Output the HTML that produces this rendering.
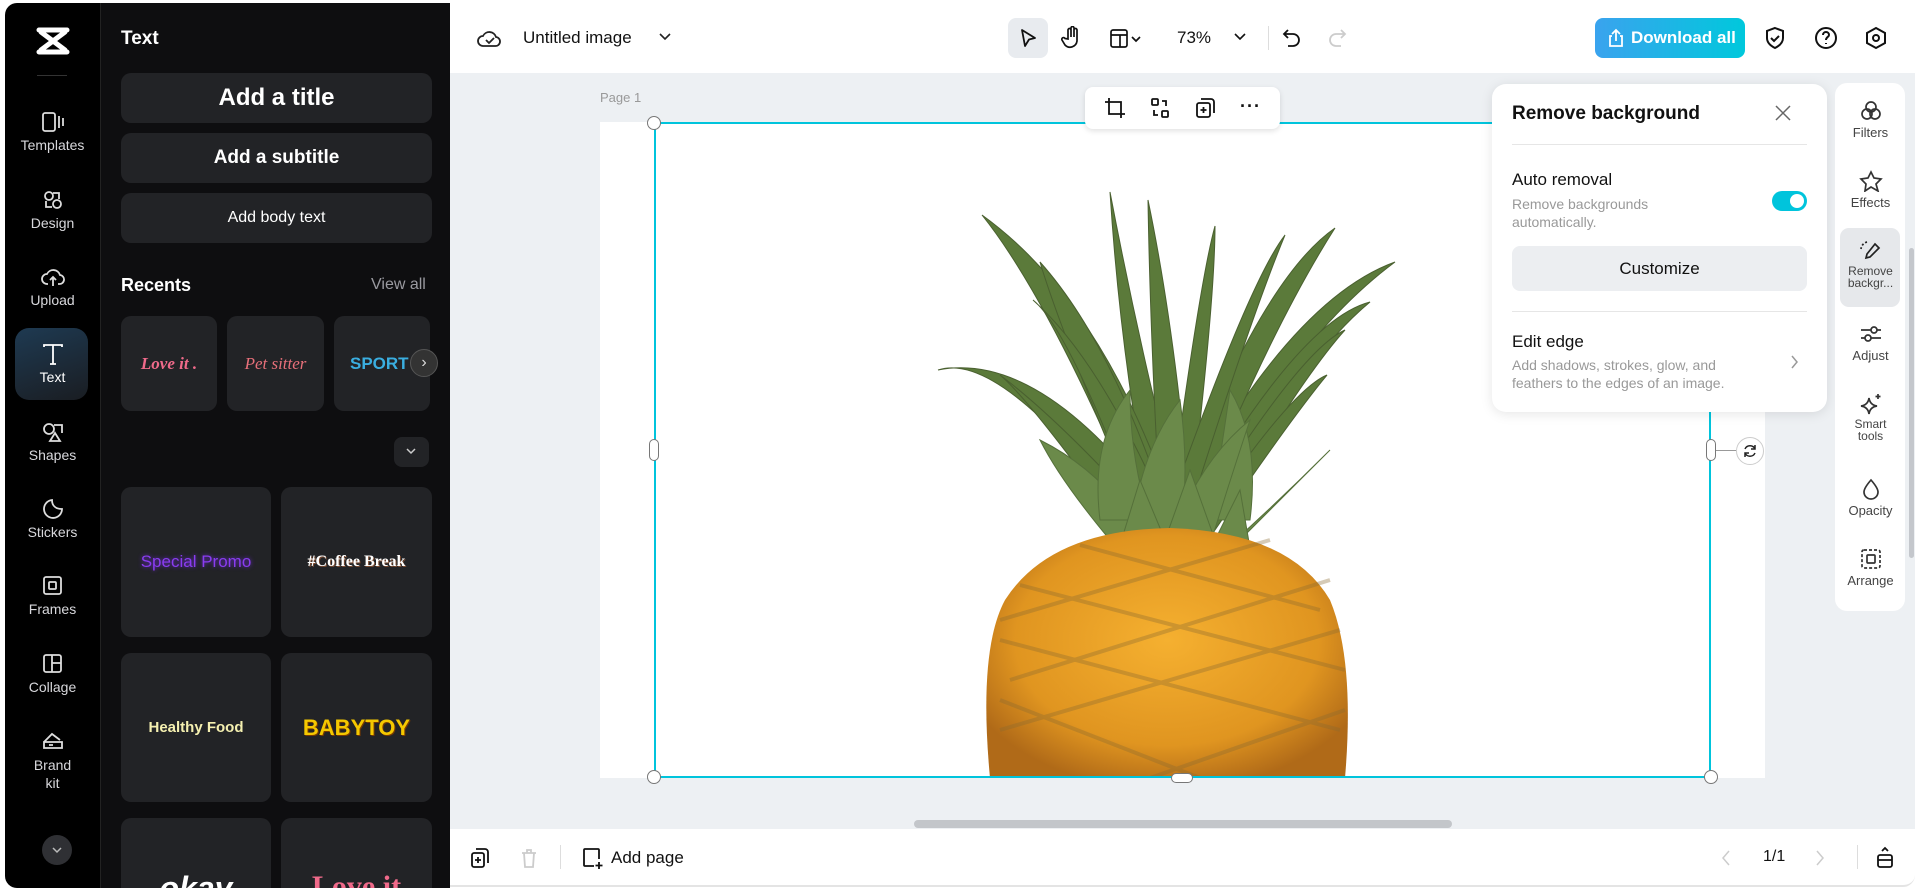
<!DOCTYPE html>
<html><head><meta charset="utf-8"><style>
*{box-sizing:border-box;margin:0;padding:0}
body{width:1920px;height:893px;overflow:hidden;background:#fff;font-family:"Liberation Sans",sans-serif;position:relative}
.abs{position:absolute}
#side{left:5px;top:3px;width:95px;height:885px;background:#000;border-radius:12px 0 0 12px}
#panel{left:100px;top:3px;width:350px;height:885px;background:#0e0e10;border-left:1px solid #222;overflow:hidden}
.nav{position:absolute;left:0;width:95px;text-align:center;color:#d8d8dc;font-size:14px}
.nav svg{display:block;margin:0 auto 4px}
.btn{position:absolute;left:20px;width:311px;height:50px;background:#222326;border-radius:10px;color:#fff;font-weight:bold;text-align:center;line-height:50px}
.card{position:absolute;background:#222326;border-radius:10px;display:flex;align-items:center;justify-content:center}
.ti{font-size:13px;color:#444;text-align:center;position:absolute;width:67px;left:0}
.ti svg{display:block;margin:0 auto 3px}
</style></head><body>
<div id="side" class="abs">
 <svg class="abs" style="left:31px;top:24px" width="34" height="28" viewBox="0 0 34 28"><path d="M3 3 H31 M3 25 H31 M5 5 L29 23 M29 5 L5 23" stroke="#fff" stroke-width="5" fill="none" stroke-linecap="round"/></svg>
 <div class="abs" style="left:32px;top:72px;width:30px;height:1px;background:#333"></div>
 <div class="nav" style="top:108px"><svg width="24" height="22" viewBox="0 0 24 22" fill="none" stroke="#ddd" stroke-width="1.8"><rect x="2" y="2" width="12" height="18" rx="2"/><path d="M18 5v12M22 7v8"/></svg>Templates</div>
 <div class="nav" style="top:186px"><svg width="22" height="22" viewBox="0 0 22 22" fill="none" stroke="#ddd" stroke-width="1.8"><circle cx="7" cy="7" r="4"/><circle cx="15" cy="15" r="4"/><path d="M11 4l6 0 0 6M4 12l0 6 6 0"/></svg>Design</div>
 <div class="nav" style="top:263px"><svg width="24" height="22" viewBox="0 0 24 22" fill="none" stroke="#ddd" stroke-width="1.8"><path d="M7 18H6a5 5 0 010-10 7 7 0 0113 1 4 4 0 01-1 9h-1M12 11v9M9 14l3-3 3 3"/></svg>Upload</div>
 <div class="abs" style="left:10px;top:325px;width:73px;height:72px;border-radius:14px;background:linear-gradient(160deg,#1e3a52,#1a1d22)"></div>
 <div class="nav" style="top:340px;color:#fff"><svg width="24" height="22" viewBox="0 0 24 22" fill="none" stroke="#fff" stroke-width="1.8"><path d="M3 4V2h18v2M12 2v19M9 21h6"/></svg>Text</div>
 <div class="nav" style="top:418px"><svg width="24" height="22" viewBox="0 0 24 22" fill="none" stroke="#ddd" stroke-width="1.8"><circle cx="8" cy="8" r="5"/><path d="M13 4h8v8M14 12l-5 8h10z"/></svg>Shapes</div>
 <div class="nav" style="top:495px"><svg width="24" height="22" viewBox="0 0 24 22" fill="none" stroke="#ddd" stroke-width="1.8"><path d="M21 11a9 9 0 11-10-9c0 6 4 9 10 9z"/></svg>Stickers</div>
 <div class="nav" style="top:572px"><svg width="24" height="22" viewBox="0 0 24 22" fill="none" stroke="#ddd" stroke-width="1.8"><rect x="3" y="2" width="17" height="17" rx="2"/><rect x="8" y="7" width="7" height="7" rx="1"/></svg>Frames</div>
 <div class="nav" style="top:650px"><svg width="24" height="22" viewBox="0 0 24 22" fill="none" stroke="#ddd" stroke-width="1.8"><rect x="3" y="2" width="17" height="17" rx="2"/><path d="M11 2v17M11 10h9"/></svg>Collage</div>
 <div class="nav" style="top:727px;line-height:18px"><svg width="24" height="22" viewBox="0 0 24 22" fill="none" stroke="#ddd" stroke-width="1.8"><path d="M3 12h18v6H3zM3 12l8-8 8 6M8 15h4"/></svg>Brand<br>kit</div>
 <div class="abs" style="left:37px;top:832px;width:30px;height:30px;border-radius:50%;background:#2f3034"></div>
 <svg class="abs" style="left:45px;top:842px" width="14" height="10"><path d="M3 3l4 4 4-4" stroke="#bbb" fill="none" stroke-width="1.5"/></svg>
</div>
<div id="panel" class="abs">
 <div class="abs" style="left:20px;top:25px;color:#fff;font-weight:bold;font-size:19px">Text</div>
 <div class="btn" style="top:70px;font-size:24px">Add a title</div>
 <div class="btn" style="top:130px;font-size:19px">Add a subtitle</div>
 <div class="btn" style="top:190px;font-size:16px;font-weight:normal">Add body text</div>
 <div class="abs" style="left:20px;top:272px;color:#fff;font-weight:bold;font-size:18px">Recents</div>
 <div class="abs" style="left:270px;top:273px;color:#9a9aa0;font-size:16px">View all</div>
 <div class="card" style="left:20px;top:313px;width:96px;height:95px"><span style="color:#f06a8a;font:italic bold 17px 'Liberation Serif',serif">Love it .</span></div>
 <div class="card" style="left:126px;top:313px;width:97px;height:95px"><span style="color:#e8707a;font:italic 17px 'Liberation Serif',serif">Pet sitter</span></div>
 <div class="card" style="left:233px;top:313px;width:96px;height:95px;justify-content:flex-start;padding-left:16px"><span style="color:#3aaee0;font-weight:bold;font-size:17px">SPORT</span></div>
 <div class="abs" style="left:309px;top:346px;width:28px;height:28px;border-radius:50%;background:#333;border:1px solid #555;color:#ddd;text-align:center;line-height:26px;font-size:16px">›</div>
 <div class="abs" style="left:293px;top:434px;width:35px;height:30px;border-radius:8px;background:#222326"></div>
 <svg class="abs" style="left:303px;top:444px" width="14" height="10"><path d="M3 2l4 4 4-4" stroke="#ccc" fill="none" stroke-width="1.5"/></svg>
 <div class="card" style="left:20px;top:484px;width:150px;height:150px"><span style="color:#8a3cf0;font-size:17px;text-shadow:0 0 4px #6a2cd0">Special Promo</span></div>
 <div class="card" style="left:180px;top:484px;width:151px;height:150px"><span style="color:#fff;font:bold 16px 'Liberation Serif',serif;text-shadow:1px 1px 0 #7a4a30">#Coffee Break</span></div>
 <div class="card" style="left:20px;top:650px;width:150px;height:149px"><span style="color:#f5f0b0;font-weight:bold;font-size:15px">Healthy Food</span></div>
 <div class="card" style="left:180px;top:650px;width:151px;height:149px"><span style="color:#f5c800;font-weight:900;font-size:22px;text-shadow:1px 1px 0 #7a3a00">BABYTOY</span></div>
 <div class="card" style="left:20px;top:815px;width:150px;height:90px;overflow:hidden;align-items:flex-start;padding-top:52px"><span style="color:#fff;font:italic 900 32px 'Liberation Sans',sans-serif">okay</span></div>
 <div class="card" style="left:180px;top:815px;width:151px;height:90px;overflow:hidden;align-items:flex-start;padding-top:52px"><span style="color:#f06a8a;font:bold 30px 'Liberation Serif',serif">Love it</span></div>
</div>
<div class="abs" style="left:450px;top:415px;width:8px;height:62px;background:#1a1a1a;border-radius:0 8px 8px 0"></div>
<!-- top bar -->
<div class="abs" style="left:450px;top:3px;width:1465px;height:70px;background:#fff"></div>
<svg class="abs" style="left:477px;top:27px" width="26" height="24" viewBox="0 0 26 24" fill="none" stroke="#222" stroke-width="1.8"><path d="M7 19H6a5 5 0 010-10 7 7 0 0113 1 4 4 0 01-1 9H7z"/><path d="M9 13l3 3 5-5"/></svg>
<div class="abs" style="left:523px;top:28px;font-size:17px;color:#111">Untitled image</div>
<svg class="abs" style="left:658px;top:32px" width="14" height="10"><path d="M2 2l5 5 5-5" stroke="#222" fill="none" stroke-width="1.6"/></svg>
<div class="abs" style="left:1008px;top:18px;width:40px;height:40px;border-radius:8px;background:#e8ebef"></div>
<svg class="abs" style="left:1018px;top:28px" width="20" height="20" viewBox="0 0 20 20"><path d="M4 2l13 8-6 1.5L7 18z" stroke="#111" fill="none" stroke-width="1.8" stroke-linejoin="round"/></svg>
<svg class="abs" style="left:1061px;top:26px" width="22" height="24" viewBox="0 0 22 24" fill="none" stroke="#111" stroke-width="1.7"><path d="M7 13V4a1.5 1.5 0 013 0v7V2a1.5 1.5 0 013 0v9V4a1.5 1.5 0 013 0v11a7 7 0 01-12 4l-3-5a1.5 1.5 0 013-1.5z"/></svg>
<svg class="abs" style="left:1110px;top:29px" width="34" height="20" viewBox="0 0 34 20" fill="none" stroke="#111" stroke-width="1.7"><rect x="1" y="1" width="16" height="17" rx="2"/><path d="M1 6h16M10 6v12M22 8l4 4 4-4"/></svg>
<div class="abs" style="left:1177px;top:28px;font-size:17px;color:#111">73%</div>
<svg class="abs" style="left:1233px;top:32px" width="14" height="10"><path d="M2 2l5 5 5-5" stroke="#111" fill="none" stroke-width="1.6"/></svg>
<div class="abs" style="left:1268px;top:26px;width:1px;height:24px;background:#ddd"></div>
<svg class="abs" style="left:1282px;top:27px" width="20" height="22" viewBox="0 0 20 22" fill="none" stroke="#111" stroke-width="1.8"><path d="M6 3L2 7l4 4M2 7h9a6 6 0 010 12H6"/></svg>
<svg class="abs" style="left:1327px;top:27px" width="20" height="22" viewBox="0 0 20 22" fill="none" stroke="#ccc" stroke-width="1.8"><path d="M14 3l4 4-4 4M18 7H9a6 6 0 000 12h5"/></svg>
<div class="abs" style="left:1595px;top:18px;width:150px;height:40px;border-radius:8px;background:linear-gradient(90deg,#3aa3ee,#00c8dc);color:#fff;font-weight:bold;font-size:17px;line-height:40px;padding-left:36px">Download all</div>
<svg class="abs" style="left:1607px;top:28px" width="18" height="20" viewBox="0 0 18 20" fill="none" stroke="#fff" stroke-width="1.8"><path d="M5 8H3v10h12V8h-2M9 13V2M5 6l4-4 4 4"/></svg>
<svg class="abs" style="left:1764px;top:26px" width="22" height="24" viewBox="0 0 22 24" fill="none" stroke="#111" stroke-width="2"><path d="M11 2l8 3v7c0 5-4 8-8 10-4-2-8-5-8-10V5z"/><path d="M7 12l3 3 5-5"/></svg>
<svg class="abs" style="left:1814px;top:26px" width="24" height="24" viewBox="0 0 24 24" fill="none" stroke="#111" stroke-width="2"><circle cx="12" cy="12" r="10"/><path d="M9 9a3 3 0 116 0c0 2-3 2-3 5M12 17v1"/></svg>
<svg class="abs" style="left:1864px;top:26px" width="24" height="24" viewBox="0 0 24 24" fill="none" stroke="#111" stroke-width="2"><path d="M12 2l9 5v10l-9 5-9-5V7z"/><circle cx="12" cy="12" r="3"/></svg>
<!-- canvas -->
<div class="abs" style="left:450px;top:73px;width:1465px;height:756px;background:#edf0f3"></div>
<div class="abs" style="left:600px;top:90px;font-size:13px;color:#999">Page 1</div>
<div class="abs" style="left:600px;top:122px;width:1165px;height:656px;background:#fff"></div>
<svg class="abs" style="left:600px;top:122px" width="1165" height="656" viewBox="600 122 1165 656">
 <defs><radialGradient id="pg" cx="50%" cy="45%" r="60%"><stop offset="0" stop-color="#f5b030"/><stop offset=".7" stop-color="#e09520"/><stop offset="1" stop-color="#b06a18"/></radialGradient></defs>
 <g fill="#5b7a3a" stroke="#4a6030" stroke-width="1">
  <path d="M1150 510 Q1120 350 1110 192 Q1140 350 1180 505z"/>
  <path d="M1160 510 Q1150 330 1148 200 Q1175 330 1190 505z"/>
  <path d="M1140 515 Q1050 300 982 215 Q1100 300 1170 500z"/>
  <path d="M1140 520 Q1060 330 1040 262 Q1110 340 1165 505z"/>
  <path d="M1180 505 Q1290 300 1395 262 Q1290 340 1200 515z"/>
  <path d="M1175 505 Q1260 280 1335 228 Q1270 330 1195 515z"/>
  <path d="M1130 520 Q1000 350 938 370 Q1040 350 1160 510z"/>
  <path d="M1190 510 Q1300 320 1370 302 Q1300 360 1210 520z"/>
  <path d="M1195 520 Q1300 350 1345 330 Q1300 380 1215 525z"/>
  <path d="M1140 520 Q1070 330 1033 300 Q1100 360 1165 510z"/>
  <path d="M1200 525 Q1290 390 1327 375 Q1290 420 1215 530z"/>
  <path d="M1120 525 Q1030 400 1000 375 Q1060 420 1150 520z"/>
  <path d="M1170 505 Q1200 280 1215 226 Q1215 300 1190 510z"/>
  <path d="M1170 505 Q1250 280 1285 235 Q1250 320 1190 510z"/>
 </g>
 <g fill="#6b8a4a" stroke="#55703a" stroke-width="1">
  <path d="M1110 540 Q1060 480 1040 440 Q1100 470 1140 530z"/>
  <path d="M1240 540 Q1300 480 1330 450 Q1280 500 1230 545z"/>
  <path d="M1100 520 Q1090 440 1130 390 Q1130 460 1150 520z"/>
  <path d="M1250 520 Q1260 440 1230 390 Q1220 460 1210 520z"/>
  <path d="M1130 540 Q1140 450 1180 400 Q1190 470 1180 540z"/>
  <path d="M1170 540 Q1200 460 1250 420 Q1230 480 1210 545z"/>
  <path d="M1120 545 L1140 480 L1165 540 L1190 470 L1215 540 L1240 490 L1250 548z"/>
 </g>
 <path d="M990 778 Q978 650 1005 600 Q1050 530 1170 528 Q1290 532 1330 600 Q1355 660 1345 778z" fill="url(#pg)"/>
 <g stroke="#8a6a30" stroke-width="4" opacity=".35" fill="none">
  <path d="M1000 640 L1340 730 M1000 700 L1200 778 M1020 585 L1345 670 M1080 545 L1320 610"/>
  <path d="M1340 630 L1000 730 M1330 580 L1010 680 M1270 540 L1000 620 M1345 710 L1150 778"/>
 </g>
</svg>
<div class="abs" style="left:654px;top:122px;width:1057px;height:656px;border:2px solid #00c4dc"></div>
<div class="abs" style="left:647px;top:116px;width:14px;height:14px;border-radius:50%;background:#fff;border:1px solid #777"></div>
<div class="abs" style="left:647px;top:770px;width:14px;height:14px;border-radius:50%;background:#fff;border:1px solid #777"></div>
<div class="abs" style="left:1704px;top:770px;width:14px;height:14px;border-radius:50%;background:#fff;border:1px solid #777"></div>
<div class="abs" style="left:649px;top:439px;width:10px;height:22px;border-radius:5px;background:#fff;border:1px solid #777"></div>
<div class="abs" style="left:1706px;top:439px;width:10px;height:22px;border-radius:5px;background:#fff;border:1px solid #777"></div>
<div class="abs" style="left:1171px;top:773px;width:22px;height:10px;border-radius:5px;background:#fff;border:1px solid #777"></div>
<div class="abs" style="left:1716px;top:450px;width:20px;height:1px;background:#999"></div>
<div class="abs" style="left:1736px;top:437px;width:28px;height:28px;border-radius:50%;background:#fff;border:1px solid #ccc"></div>
<svg class="abs" style="left:1742px;top:443px" width="16" height="16" viewBox="0 0 16 16" fill="none" stroke="#222" stroke-width="1.5"><path d="M13 6a5.5 5.5 0 00-10 0M3 10a5.5 5.5 0 0010 0M13 2v4H9M3 14v-4h4"/></svg>
<div class="abs" style="left:1085px;top:87px;width:195px;height:42px;border-radius:8px;background:#fff;box-shadow:0 2px 6px rgba(0,0,0,.12)"></div>
<svg class="abs" style="left:1104px;top:97px" width="22" height="22" viewBox="0 0 22 22" fill="none" stroke="#111" stroke-width="1.8"><path d="M5 1v16h16M1 5h16v16"/></svg>
<svg class="abs" style="left:1149px;top:97px" width="22" height="22" viewBox="0 0 22 22" fill="none" stroke="#111" stroke-width="1.8"><rect x="3" y="2" width="6" height="6" rx="1"/><rect x="13" y="14" width="6" height="6" rx="1"/><path d="M13 4h4v5M9 18H5v-5"/></svg>
<svg class="abs" style="left:1194px;top:97px" width="22" height="22" viewBox="0 0 22 22" fill="none" stroke="#111" stroke-width="1.8"><rect x="3" y="6" width="13" height="14" rx="2"/><path d="M7 2h10a3 3 0 013 3v11M9.5 10v6M6.5 13h6"/></svg>
<div class="abs" style="left:1240px;top:96px;font-size:18px;font-weight:bold;color:#111;letter-spacing:1px">···</div>
<!-- Remove bg panel -->
<div class="abs" style="left:1492px;top:84px;width:335px;height:328px;border-radius:14px;background:#fff;box-shadow:0 2px 12px rgba(0,0,0,.1)"></div>
<div class="abs" style="left:1512px;top:103px;font-size:19px;font-weight:bold;color:#111">Remove background</div>
<svg class="abs" style="left:1774px;top:104px" width="18" height="18"><path d="M2 2l14 14M16 2L2 16" stroke="#666" stroke-width="1.5"/></svg>
<div class="abs" style="left:1512px;top:144px;width:295px;height:1px;background:#e6e6e6"></div>
<div class="abs" style="left:1512px;top:170px;font-size:17px;color:#111">Auto removal</div>
<div class="abs" style="left:1512px;top:195px;font-size:14px;color:#999;line-height:18px">Remove backgrounds<br>automatically.</div>
<div class="abs" style="left:1772px;top:191px;width:35px;height:20px;border-radius:10px;background:#00c4dc"></div>
<div class="abs" style="left:1790px;top:194px;width:14px;height:14px;border-radius:50%;background:#fff"></div>
<div class="abs" style="left:1512px;top:246px;width:295px;height:45px;border-radius:8px;background:#eceef1;text-align:center;line-height:45px;font-size:17px;color:#111">Customize</div>
<div class="abs" style="left:1512px;top:311px;width:295px;height:1px;background:#e6e6e6"></div>
<div class="abs" style="left:1512px;top:332px;font-size:17px;color:#111">Edit edge</div>
<div class="abs" style="left:1512px;top:356px;font-size:14px;color:#999;line-height:18px">Add shadows, strokes, glow, and<br>feathers to the edges of an image.</div>
<svg class="abs" style="left:1790px;top:354px" width="10" height="16"><path d="M2 2l5 6-5 6" stroke="#999" fill="none" stroke-width="1.5"/></svg>
<!-- right tool panel -->
<div class="abs" style="left:1835px;top:83px;width:70px;height:528px;border-radius:12px;background:#fff"></div>
<div class="abs" style="left:1909px;top:248px;width:5px;height:310px;border-radius:3px;background:#c4c7cc"></div>
<div class="abs" style="left:1840px;top:228px;width:60px;height:79px;border-radius:9px;background:#e6e8eb"></div>
<div style="position:absolute;left:1837px;top:0">
 <div class="ti" style="top:100px"><svg width="24" height="22" viewBox="0 0 24 22" fill="none" stroke="#333" stroke-width="1.7"><circle cx="12" cy="7" r="5"/><circle cx="8" cy="14" r="5"/><circle cx="16" cy="14" r="5"/></svg>Filters</div>
 <div class="ti" style="top:170px"><svg width="24" height="22" viewBox="0 0 24 22" fill="none" stroke="#333" stroke-width="1.7"><path d="M12 2l3 6 7 1-5 5 2 7-7-4-6 4 1-7-5-5 7-1z"/></svg>Effects</div>
 <div class="ti" style="top:240px;line-height:12px;font-size:12px"><svg width="24" height="22" viewBox="0 0 24 22" fill="none" stroke="#222" stroke-width="1.7"><path d="M8 2a8 8 0 00-6 7" stroke-dasharray="2 2"/><path d="M16 4l4 4-9 9-4 1 1-4z"/></svg>Remove<br>backgr...</div>
 <div class="ti" style="top:323px"><svg width="24" height="22" viewBox="0 0 24 22" fill="none" stroke="#333" stroke-width="1.7"><path d="M2 7h20M2 15h20"/><circle cx="15" cy="7" r="3" fill="#fff"/><circle cx="9" cy="15" r="3" fill="#fff"/></svg>Adjust</div>
 <div class="ti" style="top:393px;line-height:12px;font-size:12px"><svg width="24" height="22" viewBox="0 0 24 22" fill="none" stroke="#333" stroke-width="1.7"><path d="M10 5q1 7 8 8-7 1-8 8-1-7-8-8 7-1 8-8zM19 1v5M16.5 3.5h5"/></svg>Smart<br>tools</div>
 <div class="ti" style="top:478px"><svg width="24" height="22" viewBox="0 0 24 22" fill="none" stroke="#333" stroke-width="1.7"><path d="M12 2q7 8 7 12a7 7 0 01-14 0q0-4 7-12z"/></svg>Opacity</div>
 <div class="ti" style="top:548px"><svg width="24" height="22" viewBox="0 0 24 22" fill="none" stroke="#333" stroke-width="1.7"><rect x="3" y="2" width="18" height="18" rx="2" stroke-dasharray="3 2"/><rect x="8" y="7" width="8" height="8" rx="1"/></svg>Arrange</div>
</div>
<!-- bottom -->
<div class="abs" style="left:914px;top:820px;width:538px;height:8px;border-radius:4px;background:#c3c6ca"></div>
<div class="abs" style="left:450px;top:829px;width:1465px;height:58px;background:#fff;border-bottom:2px solid #e4e4e4;border-radius:0 0 12px 0"></div>
<svg class="abs" style="left:469px;top:847px" width="22" height="22" viewBox="0 0 22 22" fill="none" stroke="#111" stroke-width="1.8"><rect x="3" y="6" width="12" height="14" rx="2"/><path d="M7 2h9a3 3 0 013 3v11M9 10v6M6 13h6"/></svg>
<svg class="abs" style="left:519px;top:847px" width="20" height="22" viewBox="0 0 20 22" fill="none" stroke="#ccc" stroke-width="1.8"><path d="M3 6h14M8 6V3h4v3M5 6l1 14h8l1-14"/></svg>
<div class="abs" style="left:560px;top:845px;width:1px;height:24px;background:#ddd"></div>
<svg class="abs" style="left:581px;top:846px" width="24" height="24" viewBox="0 0 24 24" fill="none" stroke="#111" stroke-width="1.8"><path d="M13 20H4a1 1 0 01-1-1V4a1 1 0 011-1h13a1 1 0 011 1v9M18 16v7M14.5 19.5h7"/></svg>
<div class="abs" style="left:611px;top:848px;font-size:17px;color:#111">Add page</div>
<svg class="abs" style="left:1720px;top:849px" width="12" height="18"><path d="M9 2L3 9l6 7" stroke="#ccc" fill="none" stroke-width="1.5"/></svg>
<div class="abs" style="left:1763px;top:848px;font-size:16px;color:#111">1/1</div>
<svg class="abs" style="left:1814px;top:849px" width="12" height="18"><path d="M3 2l6 7-6 7" stroke="#ccc" fill="none" stroke-width="1.5"/></svg>
<div class="abs" style="left:1857px;top:845px;width:1px;height:24px;background:#ddd"></div>
<svg class="abs" style="left:1875px;top:845px" width="20" height="24" viewBox="0 0 20 24" fill="none" stroke="#111" stroke-width="1.8"><rect x="3" y="10" width="14" height="12" rx="2"/><path d="M3 15h14M7 6l3-3 3 3"/></svg>
</body></html>
